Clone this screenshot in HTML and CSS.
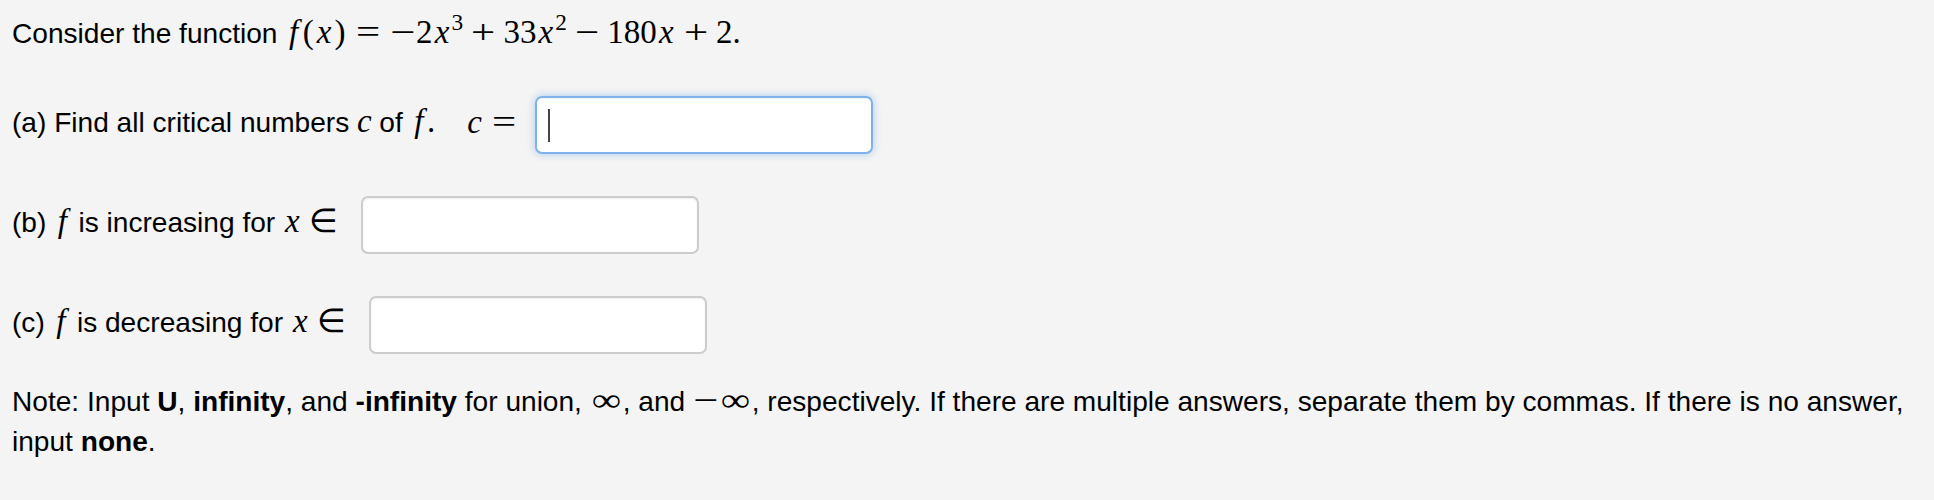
FILE: index.html
```html
<!DOCTYPE html>
<html lang="en">
<head>
<meta charset="utf-8">
<title>Critical numbers</title>
<link rel="stylesheet" href="styles.css">
</head>
<body>
<div class="page">
  <p class="line intro">Consider the function <span class="math"><span class="mf">f</span><span class="mo">(</span><span class="mx">x</span><span class="mo">)</span><span class="rel">=</span><span class="un">−</span>2<span class="mx">x</span><sup>3</sup><span class="bin">+</span>33<span class="mx">x</span><sup>2</sup><span class="bin">−</span>180<span class="mx">x</span><span class="bin">+</span>2.</span></p>

  <div class="row row-a">
    <span class="label">(a) Find all critical numbers <span class="math"><span class="mc">c</span></span> of <span class="math"><span class="mf">f</span>.</span></span>
    <span class="math lhs"><span class="mc">c</span><span class="rel">=</span></span>
    <span class="field focused"><span class="box"></span><span class="caret"></span></span>
  </div>

  <div class="row row-b">
    <span class="label">(b) <span class="math"><span class="mf">f</span></span> is increasing for <span class="math"><span class="mx">x</span><span class="rel elem">∈</span></span></span>
    <span class="field"><span class="box"></span></span>
  </div>

  <div class="row row-c">
    <span class="label">(c) <span class="math"><span class="mf">f</span></span> is decreasing for <span class="math"><span class="mx">x</span><span class="rel elem">∈</span></span></span>
    <span class="field"><span class="box"></span></span>
  </div>

  <p class="line note">Note: Input <b>U</b>, <b>infinity</b>, and <b>-infinity</b> for union, <span class="math"><span class="inf">∞</span></span>, and <span class="math"><span class="un">−</span><span class="inf">∞</span></span>, respectively. If there are multiple answers, separate them by commas. If there is no answer, input <b>none</b>.</p>
</div>
</body>
</html>
```
FILE: styles.css
```css
html, body {
  margin: 0;
  padding: 0;
  background: #f4f4f4;
}

.page {
  padding: 0 4px 0 12px;
  font-family: "Liberation Sans", Arial, Helvetica, sans-serif;
  font-size: 28.1px;
  color: #000;
}

.line {
  margin: 0;
  line-height: 40px;
}

.intro {
  padding-top: 14px;
}

.row {
  display: flex;
  align-items: center;
  margin-top: 42px;
  height: 58px;
  line-height: 40px;
  white-space: nowrap;
}

.row-a {
  margin-top: 42px;
}

.label,
.lhs {
  margin-bottom: 5px;
}

.note {
  margin-top: 28px;
}

/* math */
.math {
  font-family: "Liberation Serif", "Times New Roman", serif;
  font-size: 33px;
  line-height: 1;
}

.mf, .mx, .mc {
  font-style: italic;
  display: inline-block;
  text-align: center;
}
.mf { width: 0.5em; }
.mx { width: 0.572em; }
.mc { width: 0.44em; }

.mo {
  display: inline-block;
  width: 0.39em;
  text-align: center;
}

.rel {
  display: inline-block;
  width: 1.334em;
  text-align: center;
  transform: scaleX(1.3);
}

.rel.elem {
  transform: none;
}

.bin {
  display: inline-block;
  width: 1.222em;
  text-align: center;
  transform: scaleX(1.3);
}

.un {
  display: inline-block;
  width: 0.778em;
  text-align: center;
  transform: scaleX(1.35);
}

.inf {
  display: inline-block;
  width: 1em;
  text-align: center;
  transform: scaleX(1.25);
}

.math sup {
  font-size: 0.707em;
  line-height: 0;
  vertical-align: 0.55em;
}

.lhs {
  margin-left: 32px;
}

/* inputs */
.field {
  position: relative;
  display: block;
  margin-left: 9px;
}
.row-b .field,
.row-c .field {
  margin-left: 15px;
}

.box {
  display: block;
  box-sizing: border-box;
  width: 338px;
  height: 58px;
  background: #fff;
  border: 2px solid #cccccc;
  border-radius: 7px;
  box-shadow: inset 0 1px 2px rgba(0, 0, 0, 0.08);
}

.focused .box {
  border-color: #7fb2ea;
  box-shadow: inset 0 1px 2px rgba(0, 0, 0, 0.06), 0 0 9px rgba(82, 150, 236, 0.45);
}

.caret {
  position: absolute;
  left: 13px;
  top: 13px;
  width: 2px;
  height: 33px;
  background: #444;
}
```
